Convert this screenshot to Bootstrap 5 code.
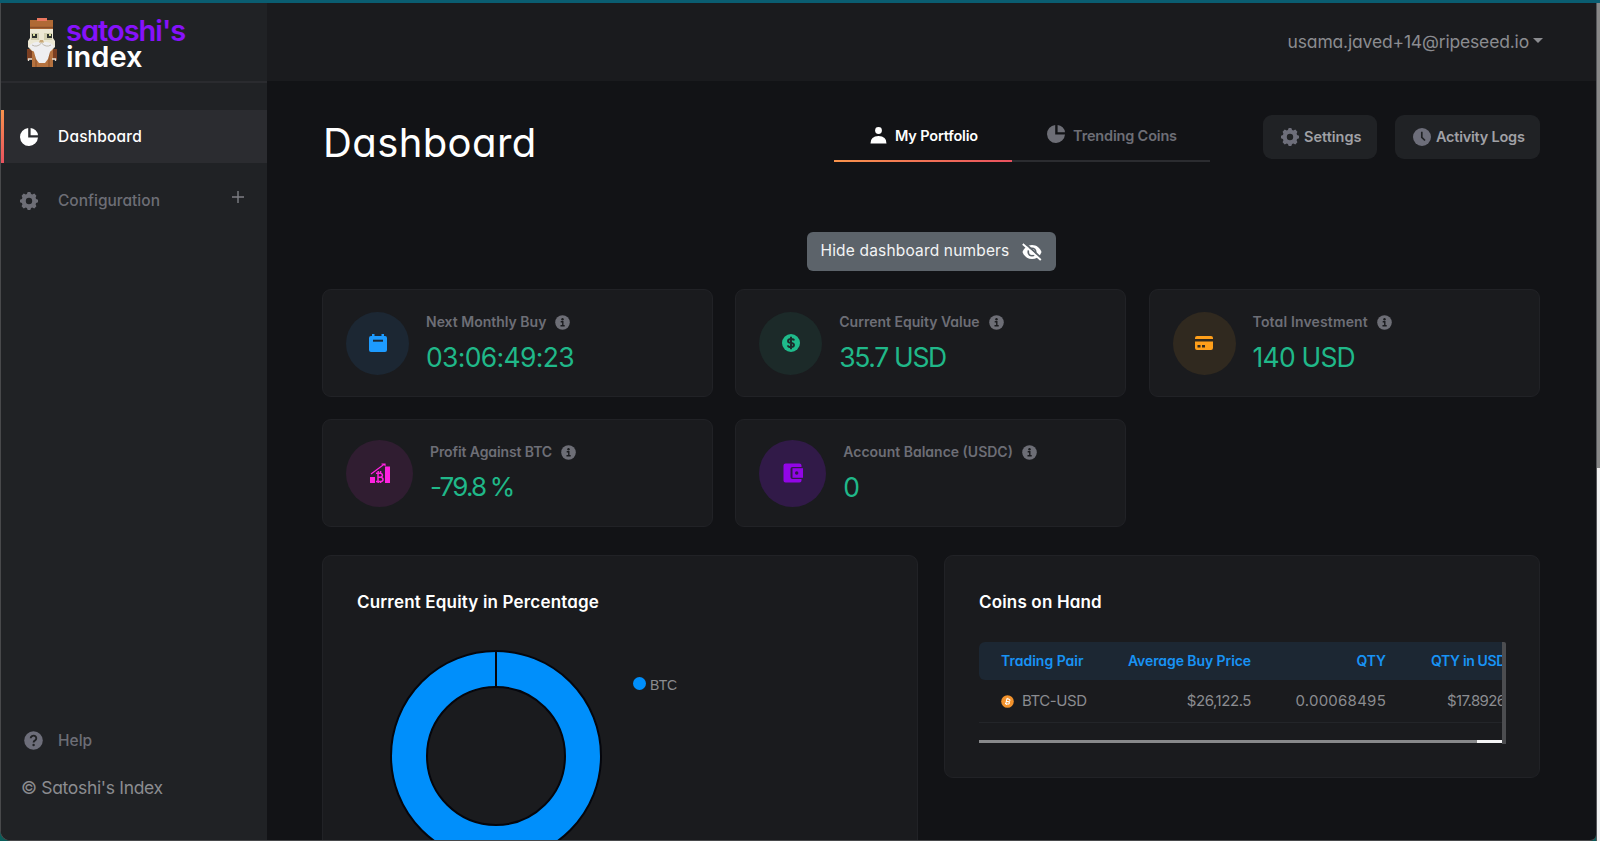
<!DOCTYPE html>
<html lang="en" data-bs-theme="dark">
<head>
<meta charset="utf-8">
<meta name="viewport" content="width=device-width, initial-scale=1">
<title>Satoshi's Index – Dashboard</title>
<link href="https://cdn.jsdelivr.net/npm/bootstrap@5.3.0/dist/css/bootstrap.min.css" rel="stylesheet">
<style>
  :root { --muted: #6d6e76; --soft: #8b8c90; --line: #212226; --panel: #1a1b1e; --green: #20b889; }
  body { font-family: Inter, "Liberation Sans", sans-serif; font-feature-settings: "cv11"; background: #0a5d5a; height: 841px; overflow: hidden; color: #fff; line-height: 1.2; }
  svg { display: block; flex: none; }
  .app { height: 841px; border-top: 3px solid #0a5d71; }
  .window { background: #121316; border-left: 1px solid #48494b; border-bottom: 1px solid #48494b; border-radius: 0 0 6px 10px; overflow: hidden; }
  .tx { white-space: nowrap; }

  .sidebar { width: 266px; background: #202225; }
  .brand { height: 80px; padding: 15px 0 0 26px; border-bottom: 2px solid #2a2b2f; gap: 9px; }
  .brand-name { font-weight: 600; font-size: 29px; line-height: 26px; }
  .brand-name .first { color: #8612fb; letter-spacing: -1px; }
  .side-link { height: 53px; padding-left: 19px; color: var(--muted); font-weight: 500; font-size: 15.5px; }
  .side-link .tx { padding-top: 1px; }
  .side-link svg { margin-right: 20px; }
  .side-link.active { background: #2b2c30; color: #fff; margin: 27px 0 11px -1px; border-left: 4px solid; border-image: linear-gradient(#f9944c, #e9515f) 1; padding-left: 16px; letter-spacing: .2px; }
  .side-link .plus { margin: 0 23px 8px auto; }
  .side-link.help { padding-left: 23px; }
  .side-link.help svg { margin-right: 15px; }
  .copyright { color: var(--soft); font-size: 17.5px; letter-spacing: -.32px; padding: 10px 0 42px 20px; }

  .topbar { height: 78px; background: var(--panel); padding: 0 53px 2px 0; color: var(--soft); font-size: 17.5px; letter-spacing: -.17px; }
  .topbar .dropdown-toggle::after { margin: -2px 0 0 4px; border-top-width: 5.5px; border-left-width: 5px; border-right-width: 5px; }
  .page { padding: 34px 56px 0 55px; }
  .page-title { font-size: 40px; font-weight: 400; letter-spacing: .4px; line-height: 47px; margin: 4px 0 0 1px; }
  .tabs { width: 376px; height: 47px; border-bottom: 2px solid #2b2c30; font-size: 14.5px; font-weight: 600; color: var(--muted); margin-right: 53px; letter-spacing: -.17px; }
  .tabs a { color: inherit; text-decoration: none; height: 47px; padding: 0 0 6px 2px; }
  .tabs a.active { width: 178px; color: #fff; border-bottom: 2px solid; border-image: linear-gradient(90deg, #f9944c, #e9515f) 1; padding-bottom: 4px; }
  .tool { width: 114px; height: 44px; background: #202225; color: #a0a1a6; border-radius: 9px; font-size: 14.5px; font-weight: 600; border: 0; padding: 0 0 0 18px; gap: 5px; }
  .tool.logs { width: 145px; margin-left: 18px; letter-spacing: -.23px; }
  .hide-row { margin-top: 66px; }
  .hide-btn { width: 249px; height: 39px; border: 0; border-radius: 6px; background: #5c636a; color: #f3f4f5; padding: 0 14px; font-size: 15.5px; letter-spacing: .17px; }

  .stats { display: grid; grid-template-columns: repeat(3, 391px); column-gap: 22.3px; row-gap: 22px; margin-top: 18px; }
  .panel { background: var(--panel); border: 1px solid var(--line); border-radius: 9px; }
  .stat { height: 108px; padding-left: 23px; gap: 17px; }
  .disc { width: 63px; height: 63px; border-radius: 50%; }
  .disc.big { width: 67px; height: 67px; }
  .blue { background: #1c2733; } .teal { background: #1c2a29; } .amber { background: #30291f; } .pink { background: #301d31; } .violet { background: #311a48; }
  .stat-label { font-size: 14px; font-weight: 600; color: var(--muted); gap: 9px; height: 17px; }
  .stat-value { font-size: 26.5px; color: var(--green); line-height: 32px; margin: 10px 0 0; }
  .lower { display: grid; grid-template-columns: 596px 596px; column-gap: 26px; margin-top: 28px; }
  .panel-title { font-size: 17px; font-weight: 600; line-height: 21px; margin: 0; letter-spacing: .17px; }
  .pad { padding: 36px 33px 0 34px; }
  .chart { height: 420px; }
  .hand { height: 223px; }
  .donut { margin: 37px 0 0 33px; }
  .legend { margin: 64px 0 0 31px; font: 14px "Liberation Sans", sans-serif; color: var(--soft); gap: 4px; height: 16px; letter-spacing: -.5px; }
  .legend i { width: 13px; height: 13px; border-radius: 50%; background: #008ffb; margin-top: -3px; }

  .coins { width: 527px; height: 102px; margin-top: 29px; border-right: 4px solid #4c4d50; border-radius: 0 2px 0 0; overflow: hidden; }
  .coins table { width: 562px; font-size: 15px; color: var(--soft); table-layout: fixed; border-collapse: separate; border-spacing: 0; text-align: right; }
  .coins th { height: 38px; background: #1c2733; color: #1893f5; font-size: 14px; font-weight: 600; padding: 0 21px 0 0; vertical-align: middle; white-space: nowrap; letter-spacing: -.08px; }
  .coins td { height: 43px; padding: 0 21px 0 0; border-bottom: 1px solid #232529; vertical-align: middle; letter-spacing: -.45px; }
  .coins tr > :first-child { text-align: left; padding-left: 22px; }
  .coins th:first-child { border-radius: 6px 0 0 6px; letter-spacing: 0; }
  .coins .qty { letter-spacing: .25px; }
  .coins .last { letter-spacing: -.36px; padding-right: 0; text-align: left; padding-left: 24px; }
  .coins td.last { padding-left: 40px; letter-spacing: -.6px; }
  .hbar { width: 523px; height: 3px; margin-top: 17px; background: linear-gradient(90deg, #88898b 498px, #f4f4f5 498px); }
  .vscroll { width: 4px; background: linear-gradient(#888 465px, #f1f1f1 465px); border-left: 1px solid #55565a; }
</style>
</head>
<body>
<svg width="0" height="0" class="position-absolute">
  <defs>
    <symbol id="pie" viewBox="0 0 18 18"><path fill="currentColor" d="M8.200 0A9 9 0 1 0 18 9.600H8.200z M10.600 0v7.300H18A8.200 8.200 0 0 0 10.600 0z"/></symbol>
    <symbol id="gear" viewBox="0 0 18 18"><path fill="currentColor" fill-rule="evenodd" d="M7.700 0h2.600l.8 1.900 1.200.5 2-.8 2.100 2.100-.8 2 .5 1.200 1.900.8v2.600l-1.900.8-.5 1.200.8 2-2.100 2.100-2-.8-1.200.5-.8 1.900H7.700l-.8-1.900-1.200-.5-2 .8-2.100-2.100.8-2-.5-1.200L0 10.300V7.700l1.900-.8.5-1.200-.8-2 2.100-2.100 2 .8 1.200-.5zM9 5.800a3.200 3.200 0 1 0 0 6.400 3.200 3.200 0 0 0 0-6.400z"/></symbol>
    <symbol id="info" viewBox="0 0 15 15"><circle cx="7.500" cy="7.500" r="7.300" fill="#6d6e76"/><circle cx="7.500" cy="4.200" r="1.200" fill="#1a1b1e"/><path d="M5.700 6.800h2.100v4M5.500 10.700h4.200" fill="none" stroke="#1a1b1e" stroke-width="1.400"/></symbol>
  </defs>
</svg>
<div class="app d-flex">
  <div class="window d-flex flex-grow-1">
  <aside class="sidebar d-flex flex-column flex-shrink-0">
    <div class="brand d-flex">
      <svg width="30" height="50" viewBox="0 0 30 50">
        <path fill="#7b3f22" d="M0 31h6v11H0zM24 31h6v11h-6z"/>
        <path fill="#b5723f" d="M5 28h21v21H5z"/><path stroke="#8a4f29" d="M9 34v15M22 34v15"/>
        <path fill="#b06a35" d="M3 2h23v9H3z"/><path fill="#e9775f" d="M10 0h10v3H10z"/><path stroke="#8a4f29" stroke-width="1.500" d="M3 9.500h23"/>
        <path fill="#ece8d4" d="M3 11h23v9l2 3v6l-4 4H5l-4-4v-6l2-3z"/>
        <path fill="#d2cfb0" d="M4 15h8v7H4zM17 15h8v7h-8z"/>
        <path fill="#30332f" d="M5 16h5v4H5zM20 16h5v4h-5z"/><path fill="#dbe3a0" d="M6 16h2v2H6zM22 16h2v2h-2z"/>
        <path fill="#eeeef1" d="M2 28q6-6 12.500-3Q21 22 27 28l-4 6-2 7-3 4h-6l-3-4-2-7z"/>
        <path fill="none" stroke="#bfb9ae" d="M5 27q5 3 9.500-2 4.500 5 9.500 2"/><path fill="#c9a777" d="M13 22h3l1 2.500h-5z"/>
        <path fill="none" stroke="#e6dfd4" stroke-width="1.300" d="M1.500 43v-2H5M28.500 43v-2H25"/>
      </svg>
      <div class="brand-name d-flex flex-column align-items-start"><span class="tx first">satoshi's</span><span class="tx">index</span></div>
    </div>
    <nav class="d-flex flex-column flex-grow-1">
      <a class="side-link active d-flex align-items-center text-decoration-none"><svg width="18" height="18"><use href="#pie"/></svg><span class="tx">Dashboard</span></a>
      <a class="side-link d-flex align-items-center text-decoration-none"><svg width="18" height="18"><use href="#gear"/></svg><span class="tx">Configuration</span>
        <svg class="plus" width="12" height="12" viewBox="0 0 12 12"><path d="M6 0v12M0 6h12" stroke="#7d7e84" stroke-width="1.400"/></svg></a>
      <a class="side-link help d-flex align-items-center text-decoration-none mt-auto"><svg width="19" height="19" viewBox="0 0 19 19"><circle cx="9.500" cy="9.500" r="9.300" fill="#6d6e7a"/><path d="M6.700 7.300a2.800 2.600 0 1 1 4.400 2.100Q9.600 10.300 9.600 11.400" fill="none" stroke="#202225" stroke-width="1.900"/><circle cx="9.600" cy="14" r="1.200" fill="#202225"/></svg><span class="tx">Help</span></a>
    </nav>
    <div class="copyright tx">© Satoshi's Index</div>
  </aside>
  <main class="flex-grow-1">
    <header class="topbar d-flex align-items-center justify-content-end"><span class="dropdown-toggle d-flex align-items-center"><span class="tx">usama.javed+14@ripeseed.io</span></span></header>
    <div class="page">
      <div class="d-flex align-items-start">
        <h1 class="page-title">Dashboard</h1>
        <nav class="tabs d-flex ms-auto">
          <a class="active d-flex align-items-center justify-content-center gap-2"><svg width="17" height="17" viewBox="0 0 17 17"><circle cx="8.500" cy="3.500" r="3.400" fill="#fff"/><path fill="#fff" d="M.5 16.500q0-7.500 8-7.500t8 7.500z"/></svg><span class="tx">My Portfolio</span></a>
          <a class="d-flex align-items-center flex-grow-1 justify-content-center gap-2"><svg class="mb-1" width="18" height="18"><use href="#pie"/></svg><span class="tx">Trending Coins</span></a>
        </nav>
        <button class="tool d-flex align-items-center"><svg width="18" height="18" color="#6d6e7a"><use href="#gear"/></svg><span class="tx">Settings</span></button>
        <button class="tool logs d-flex align-items-center"><svg width="18" height="18" viewBox="0 0 18 18"><circle cx="9" cy="9" r="9" fill="#6d6e7a"/><path d="M8.800 3.800v5.500l3.200 3.200" fill="none" stroke="#202225" stroke-width="1.700"/></svg><span class="tx">Activity Logs</span></button>
      </div>
      <div class="hide-row d-flex justify-content-center"><button class="hide-btn d-flex align-items-center justify-content-between"><span class="tx">Hide dashboard numbers</span>
        <svg width="20" height="18" viewBox="0 0 20 18"><path fill="#fff" d="M10 2C5.500 2 2 4.800.5 9 2 13.200 5.500 16 10 16s8-2.800 9.500-7C18 4.800 14.500 2 10 2z"/><circle cx="10" cy="9" r="4.600" fill="#5c636a"/><circle cx="10" cy="9" r="2.900" fill="#fff"/><path stroke="#5c636a" stroke-width="2" d="M2.500 -.2l17 15.500"/><path stroke="#fff" stroke-width="1.900" d="M.8 1l18 16"/></svg></button></div>
      <div class="stats">
        <div class="panel stat d-flex align-items-center">
          <div class="disc blue d-flex align-items-center justify-content-center"><svg width="18" height="18" viewBox="0 0 18 18"><path fill="#1d9bff" d="M3 0h2.500v2h7V0H15v2h1a2 2 0 0 1 2 2v12a2 2 0 0 1-2 2H2a2 2 0 0 1-2-2V4a2 2 0 0 1 2-2h1z"/><path stroke="#1c2733" stroke-width="2" d="M4 6.700h10"/></svg></div>
          <div><div class="stat-label d-flex align-items-center"><span class="tx">Next Monthly Buy</span><svg width="15" height="15"><use href="#info"/></svg></div><div class="stat-value tx" style="letter-spacing:-.66px">03:06:49:23</div></div>
        </div>
        <div class="panel stat d-flex align-items-center">
          <div class="disc teal d-flex align-items-center justify-content-center"><svg width="18" height="18" viewBox="0 0 18 18"><circle cx="9" cy="9" r="9" fill="#1fbb8b"/><path d="M12 6.500Q11.800 5 9 5T6 7q0 1.700 3 2t3 2q0 2-3 2t-3.200-1.700M9 2.800v12.400" fill="none" stroke="#1c2a29" stroke-width="1.900"/></svg></div>
          <div><div class="stat-label d-flex align-items-center"><span class="tx">Current Equity Value</span><svg width="15" height="15"><use href="#info"/></svg></div><div class="stat-value tx" style="letter-spacing:-1.350px">35.7 USD</div></div>
        </div>
        <div class="panel stat d-flex align-items-center">
          <div class="disc amber d-flex align-items-center justify-content-center"><svg width="18" height="18" viewBox="0 0 18 18"><path fill="#ff9f1a" d="M0 5V4a2 2 0 0 1 2-2h14a2 2 0 0 1 2 2v1zM0 7.500h18V14a2 2 0 0 1-2 2H2a2 2 0 0 1-2-2z"/><path fill="#30291f" d="M2.500 11h3v2.500h-3zM7 11h3v2.500H7z"/></svg></div>
          <div><div class="stat-label d-flex align-items-center"><span class="tx" style="letter-spacing:.15px">Total Investment</span><svg width="15" height="15"><use href="#info"/></svg></div><div class="stat-value tx" style="letter-spacing:-.8px">140 USD</div></div>
        </div>
        <div class="panel stat d-flex align-items-center">
          <div class="disc big pink d-flex align-items-center justify-content-center"><svg width="20" height="20" viewBox="0 0 20 20"><path fill="#ff22e0" d="M0 14h5v6H0zM15 3.500h5V20h-5z"/><path fill="none" stroke="#ff22e0" stroke-width="1.200" d="M1 11L14.500 1M11.500 1h3.500v2"/><path fill="none" stroke="#ff22e0" stroke-width="1.500" d="M6 10.200h4.500q2 .3 2 2t-2 2H8h2.800q2.200.3 2.200 2.200t-2.200 2.200H6M8 10v8.500M8.200 8v2M10.600 8v2M8.200 18.500v1.500M10.600 18.500v1.500"/></svg></div>
          <div><div class="stat-label d-flex align-items-center"><span class="tx" style="letter-spacing:-.1px">Profit Against BTC</span><svg width="15" height="15"><use href="#info"/></svg></div><div class="stat-value tx" style="letter-spacing:-1.800px;font-size:26px;word-spacing:-1px">-79.8 %</div></div>
        </div>
        <div class="panel stat d-flex align-items-center">
          <div class="disc big violet d-flex align-items-center justify-content-center"><svg width="20" height="20" viewBox="0 0 20 20"><path fill="#9206e6" d="M2.500.5h14a2 2 0 0 1 2 2V4H9.500a2 2 0 0 0-2 2v8a2 2 0 0 0 2 2h9v1.500a2 2 0 0 1-2 2h-14a2 2 0 0 1-2-2v-15a2 2 0 0 1 2-2z"/><path fill="#9206e6" d="M9.500 5.200H20v9.600H9.500z"/><circle cx="13.700" cy="10" r="1.700" fill="#311a48"/></svg></div>
          <div><div class="stat-label d-flex align-items-center"><span class="tx">Account Balance (USDC)</span><svg width="15" height="15"><use href="#info"/></svg></div><div class="stat-value tx">0</div></div>
        </div>
      </div>
      <div class="lower">
        <section class="panel pad chart">
          <h2 class="panel-title">Current Equity in Percentage</h2>
          <div class="d-flex align-items-start">
            <svg class="donut" width="212" height="212" viewBox="0 0 212 212"><circle cx="106" cy="106" r="87" fill="none" stroke="#008ffb" stroke-width="36"/><g fill="none" stroke="#05060c" stroke-width="2"><circle cx="106" cy="106" r="105"/><circle cx="106" cy="106" r="69"/><path d="M106 1v36"/></g></svg>
            <div class="legend d-flex align-items-center"><i></i><span>BTC</span></div>
          </div>
        </section>
        <section class="panel pad hand">
          <h2 class="panel-title">Coins on Hand</h2>
          <div class="coins">
            <table>
              <colgroup><col style="width:125px"><col style="width:168px"><col style="width:135px"><col style="width:134px"></colgroup>
              <tr><th>Trading Pair</th><th>Average Buy Price</th><th>QTY</th><th class="last">QTY in USD</th></tr>
              <tr><td><span class="d-flex align-items-center gap-2"><svg width="13" height="13" viewBox="0 0 13 13"><circle cx="6.500" cy="6.500" r="6.300" fill="#f2922c"/><path d="M5 4h2.500q1.300.2 1.200 1.200T7.200 6.500H5h2.400q1.400.2 1.200 1.300T7 9H4.500M5.300 4v5M6.200 2.800v1M6 9v1.200" fill="none" stroke="#fff" stroke-width="1" transform="rotate(12 6.500 6.500)"/></svg><span class="tx">BTC-USD</span></span></td><td>$26,122.5</td><td class="qty">0.00068495</td><td class="last">$17.8926</td></tr>
            </table>
            <div class="hbar"></div>
          </div>
        </section>
      </div>
    </div>
  </main>
  </div>
  <div class="vscroll flex-shrink-0"></div>
</div>
<script src="https://cdn.jsdelivr.net/npm/bootstrap@5.3.0/dist/js/bootstrap.bundle.min.js"></script>
</body>
</html>
